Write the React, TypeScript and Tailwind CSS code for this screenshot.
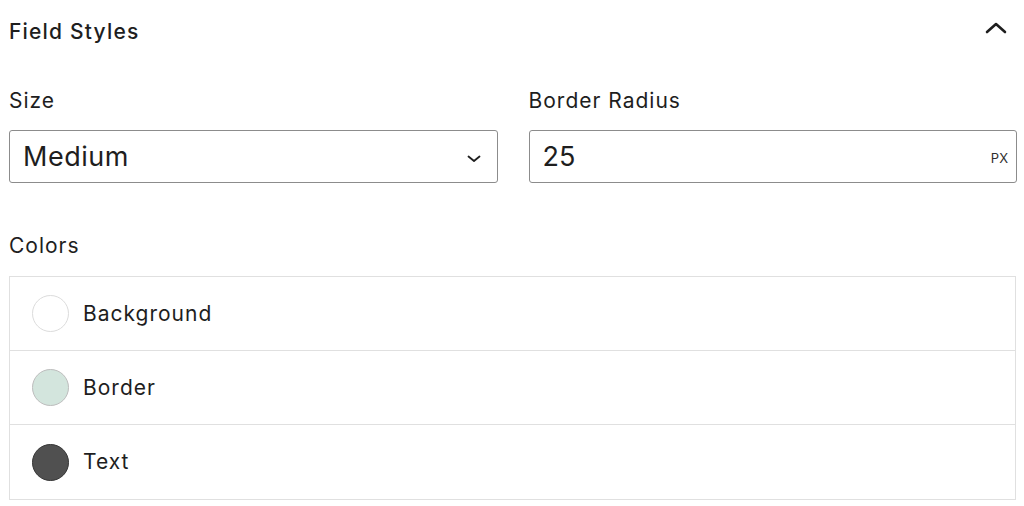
import React from "react";

const font = { fontFamily: "Inter, 'Noto Sans', sans-serif" };

function ColorRow({ label, fill, border, last }: { label: string; fill: string; border: string; last?: boolean }) {
  return (
    <div className={`flex h-[74px] items-center pl-[22px] ${last ? "" : "border-b border-[#e0e0e0]"}`}>
      <span
        className="block h-[37px] w-[37px] rounded-full border-[1.5px]"
        style={{ backgroundColor: fill, borderColor: border }}
      />
      <span className="ml-[14px] text-[21px] leading-[24px] tracking-[1px] text-[#1e1e1e]">{label}</span>
    </div>
  );
}

export default function App() {
  return (
    <div className="h-[506px] w-[1024px] bg-white pl-[9px] pr-[7px] pt-[20px] text-[#1e1e1e]" style={font}>
      <div className="flex h-6 items-center justify-between">
        <span className="text-[21px] font-medium leading-[24px] tracking-[1.2px]">Field Styles</span>
        <svg width="24" height="14" viewBox="0 0 24 14" className="mr-[9px] -mt-[8px]" fill="none">
          <path d="M3 11 L12 3 L21 11" stroke="#1e1e1e" strokeWidth="2.6" strokeLinecap="round" strokeLinejoin="round" />
        </svg>
      </div>

      <div className="mt-[45px] grid grid-cols-2 gap-x-[31px]">
        <div>
          <div className="text-[21px] leading-[24px] tracking-[1px]">Size</div>
          <div className="mt-[17px] flex h-[53px] items-center justify-between rounded-[3px] border border-[#8c8c8c] pl-[13px] pr-[16px]">
            <span className="text-[27px] leading-[32px] tracking-[0.5px]">Medium</span>
            <svg width="14" height="8" viewBox="0 0 14 8" fill="none" className="mt-[4px]">
              <path d="M1.5 1.5 L7 6 L12.5 1.5" stroke="#1e1e1e" strokeWidth="1.8" strokeLinecap="round" strokeLinejoin="round" />
            </svg>
          </div>
        </div>
        <div>
          <div className="text-[21px] leading-[24px] tracking-[1px]">Border Radius</div>
          <div className="mt-[17px] flex h-[53px] items-center justify-between rounded-[3px] border border-[#8c8c8c] pl-[13px] pr-[8px]">
            <span className="text-[27px] leading-[32px]">25</span>
            <span className="mt-[2px] text-[13px] leading-[16px] text-[#2f2f2f]">PX</span>
          </div>
        </div>
      </div>

      <div className="mt-[51px] text-[21px] leading-[24px] tracking-[1px]">Colors</div>
      <div className="mt-[18px] mr-[1px] border border-[#e0e0e0]">
        <ColorRow label="Background" fill="#ffffff" border="#dcdcdc" />
        <ColorRow label="Border" fill="#d3e5dd" border="#bdbdbd" />
        <ColorRow label="Text" fill="#505050" border="#353535" last />
      </div>
    </div>
  );
}
